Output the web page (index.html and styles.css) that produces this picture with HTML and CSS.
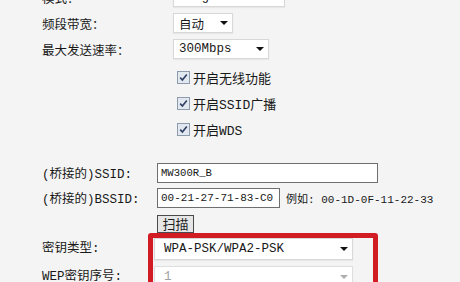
FILE: index.html
```html
<!DOCTYPE html>
<html lang="zh-CN">
<head>
    <meta charset="UTF-8">
    <title>无线设置</title>
    <link rel="stylesheet" href="styles.css">
</head>
<body>
    <div class="page">

        <!-- Réglages sans fil -->
        <div class="group">
            <div class="row">
                <span class="label">模式：</span>
                <span class="select select-mode">11bgn mixed<i class="arrow"></i></span>
            </div>
            <div class="row">
                <span class="label">频段带宽：</span>
                <span class="select select-auto">自动<i class="arrow"></i></span>
            </div>
            <div class="row">
                <span class="label">最大发送速率：</span>
                <span class="select select-rate">300Mbps<i class="arrow"></i></span>
            </div>
        </div>

        <div class="checks">
            <label class="check"><svg width="13" height="13" viewBox="0 0 13 13"><rect x="0.5" y="0.5" width="12" height="12" fill="#e2e8ef" stroke="#8d9bad"/><path d="M3.2 6.6 L5.4 9 L9.8 3.4" fill="none" stroke="#2f3f63" stroke-width="1.6"/></svg>开启无线功能</label>
            <label class="check"><svg width="13" height="13" viewBox="0 0 13 13"><rect x="0.5" y="0.5" width="12" height="12" fill="#e2e8ef" stroke="#8d9bad"/><path d="M3.2 6.6 L5.4 9 L9.8 3.4" fill="none" stroke="#2f3f63" stroke-width="1.6"/></svg>开启SSID广播</label>
            <label class="check"><svg width="13" height="13" viewBox="0 0 13 13"><rect x="0.5" y="0.5" width="12" height="12" fill="#e2e8ef" stroke="#8d9bad"/><path d="M3.2 6.6 L5.4 9 L9.8 3.4" fill="none" stroke="#2f3f63" stroke-width="1.6"/></svg>开启WDS</label>
        </div>

        <!-- Pont WDS -->
        <div class="group bridge">
            <div class="row">
                <span class="label">(桥接的)SSID:</span>
                <span class="input input-ssid">MW300R_B</span>
            </div>
            <div class="row">
                <span class="label">(桥接的)BSSID:</span>
                <span class="input input-bssid">00-21-27-71-83-C0</span>
                <span class="hint">例如: 00-1D-0F-11-22-33</span>
            </div>
            <button class="scan">扫描</button>

            <div class="keys">
                <div class="key-labels">
                    <span>密钥类型:</span>
                    <span>WEP密钥序号:</span>
                </div>
                <div class="redbox">
                    <span class="select select-key">WPA-PSK/WPA2-PSK<i class="arrow"></i></span>
                    <span class="select select-key disabled">1<i class="arrow"></i></span>
                </div>
            </div>
        </div>

    </div>
</body>
</html>
```

FILE: styles.css
```css
body {
    margin: 0;
    background-color: #f4f4f4;
    color: #181818;
    font-family: "Liberation Mono", "Noto Sans CJK SC", monospace;
    font-size: 12.5px;
    overflow: hidden;
}

.page { padding-left: 42px; margin-top: -16px; }

.row { display: flex; align-items: center; height: 26px; white-space: nowrap; }
.label { width: 131px; flex: none; }

/* Listes déroulantes */
.select {
    display: flex;
    align-items: center;
    justify-content: space-between;
    box-sizing: border-box;
    height: 20px;
    padding: 0 4px 0 5px;
    background: #fff;
    border: 1px solid #d8d8d8;
    box-shadow: 0 1px 1px rgba(0, 0, 0, 0.05);
    white-space: nowrap;
}
.select-mode { width: 112px; }
.select-auto { width: 60px; }
.select-rate { width: 96px; }

.arrow {
    width: 0;
    height: 0;
    border-left: 4px solid transparent;
    border-right: 4px solid transparent;
    border-top: 4px solid #111;
}

/* Cases à cocher */
.checks { margin-top: 2px; padding-left: 135px; }
.check { display: flex; align-items: center; gap: 3px; height: 26px; font-size: 13px; }

/* Pont */
.bridge { margin-top: 18px; }
.bridge .row { height: 25px; }
.bridge .label { width: 115px; }

.input {
    display: flex;
    align-items: center;
    flex: none;
    box-sizing: border-box;
    height: 20px;
    padding: 0 3px;
    background: #fff;
    border: 1px solid #6e6e6e;
    font-size: 11px;
}
.input-ssid { width: 221px; font-size: 10.6px; }
.input-bssid { width: 123px; }
.hint { margin-left: 6px; font-size: 11px; }

.scan {
    display: block;
    margin: 5px 0 0 115px;
    width: 37px;
    height: 18px;
    padding: 0;
    background: #e6e6e6;
    border: 1px solid #4a4a4a;
    font-family: "Noto Sans CJK SC", sans-serif;
    font-size: 13px;
    line-height: 14px;
    color: #1e1e1e;
}

/* Cadre rouge */
.keys { display: flex; white-space: nowrap; }
.key-labels {
    width: 106px;
    flex: none;
    display: flex;
    flex-direction: column;
    gap: 6px;
    padding-top: 5px;
}
.key-labels span { height: 22px; line-height: 22px; }

.redbox {
    display: flex;
    flex-direction: column;
    gap: 6px;
    padding: 0 20px 20px 1px;
    border: 5px solid #d01c22;
    border-radius: 3px;
}
.select-key { width: 199px; height: 22px; font-size: 12.5px; padding-left: 9px; }
.select.disabled { color: #a0a0a0; border-color: #dedede; }
.select.disabled .arrow { border-top-color: #b0b0b0; }
```
